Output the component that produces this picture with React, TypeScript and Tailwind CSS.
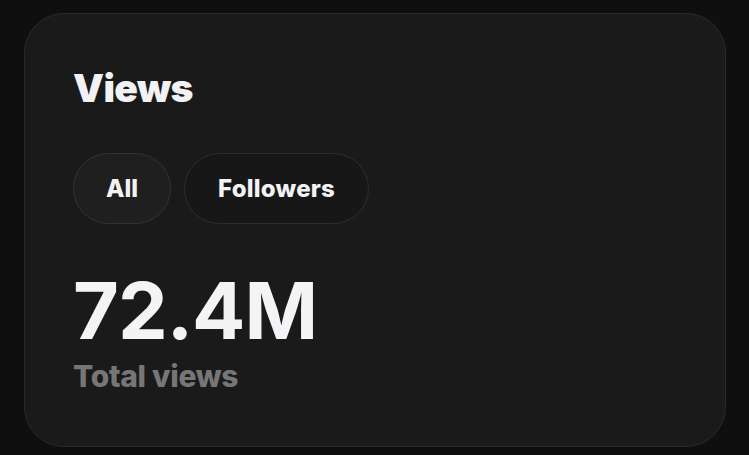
const App = () => {
  return (
    <div className="w-[749px] h-[455px] bg-[#0f0f0f] pt-[13px] pl-[24px] font-['Inter',sans-serif]">
      <section className="w-[702px] h-[434px] rounded-[40px] border border-[#2a2a2a] bg-[#1a1a1a] px-[48px] pt-[46px]">
        <h1 className="text-[39px] leading-[56px] font-black tracking-[-0.6px] text-[#f2f2f4]">
          Views
        </h1>
        <div className="flex gap-[13px] mt-[37px]">
          <button className="h-[71px] px-[32px] rounded-full border border-[#333] bg-[#1f1f1f] text-[24px] font-extrabold text-[#f2f2f4]">
            All
          </button>
          <button className="h-[71px] px-[33px] rounded-full border border-[#2e2e2e] bg-[#171717] text-[24px] font-extrabold tracking-[0.2px] text-[#f2f2f4]">
            Followers
          </button>
        </div>
        <div className="mt-[44px] text-[79px] leading-[84px] font-bold tracking-[-1px] text-[#f4f4f6]">
          72.4M
        </div>
        <div className="mt-[6px] text-[30px] leading-[36px] font-extrabold tracking-[-0.3px] text-[#767676]">
          Total views
        </div>
      </section>
    </div>
  );
};

export default App;
